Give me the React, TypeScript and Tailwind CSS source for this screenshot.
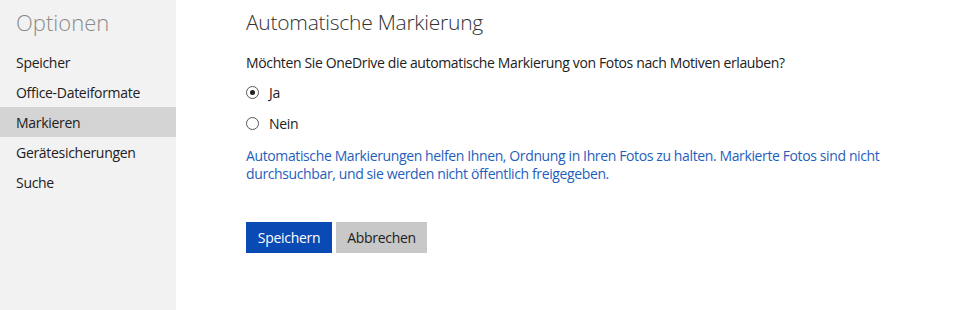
import React from "react";

const font = { fontFamily: '"Open Sans", "Noto Sans", sans-serif' };

export default function App() {
  const items = ["Speicher", "Office-Dateiformate", "Markieren", "Gerätesicherungen", "Suche"];
  return (
    <div className="flex h-[310px] w-[960px] bg-white text-[#212121]" style={font}>
      <aside className="w-[176px] shrink-0 bg-[#f2f2f2]">
        <div className="px-4 pt-[6px] text-[22px] font-light leading-[32px] text-[#8a8a8a]">Optionen</div>
        <nav className="mt-[9px] flex flex-col">
          {items.map((it) => (
            <div
              key={it}
              className={`flex h-[30px] items-center px-4 text-[14px] tracking-[-0.3px] ${it === "Markieren" ? "bg-[#d4d4d4]" : ""}`}
            >
              {it}
            </div>
          ))}
        </nav>
      </aside>
      <main className="flex-1 pl-[70px] pt-[7px]">
        <h1 className="text-[21px] font-light leading-[30px] text-[#333] tracking-[-0.25px]">Automatische Markierung</h1>
        <p className="mt-[16px] text-[14px] leading-[20px] tracking-[-0.36px]">
          Möchten Sie OneDrive die automatische Markierung von Fotos nach Motiven erlauben?
        </p>
        <div className="mt-[4px] flex flex-col">
          <label className="flex h-[30px] items-center gap-[10px] text-[14px] tracking-[-0.3px]">
            <span className="flex h-[13px] w-[13px] items-center justify-center rounded-full border border-[#555] bg-white">
              <span className="h-[5px] w-[5px] rounded-full bg-[#222]" />
            </span>
            Ja
          </label>
          <label className="mt-[1px] flex h-[30px] items-center gap-[10px] text-[14px] tracking-[-0.3px]">
            <span className="h-[13px] w-[13px] rounded-full border border-[#555] bg-white" />
            Nein
          </label>
        </div>
        <p className="mt-[9px] w-[660px] text-[14px] leading-[18px] text-[#1f5ebd] tracking-[-0.38px]">
          Automatische Markierungen helfen Ihnen, Ordnung in Ihren Fotos zu halten. Markierte Fotos sind nicht durchsuchbar, und sie werden nicht öffentlich freigegeben.
        </p>
        <div className="mt-[39px] flex gap-[4px]">
          <button className="h-[31px] w-[86px] bg-[#0a4ab4] text-[14px] text-white tracking-[-0.3px]">Speichern</button>
          <button className="h-[31px] w-[91px] bg-[#c8c8c8] text-[14px] text-[#212121] tracking-[-0.3px]">Abbrechen</button>
        </div>
      </main>
    </div>
  );
}
